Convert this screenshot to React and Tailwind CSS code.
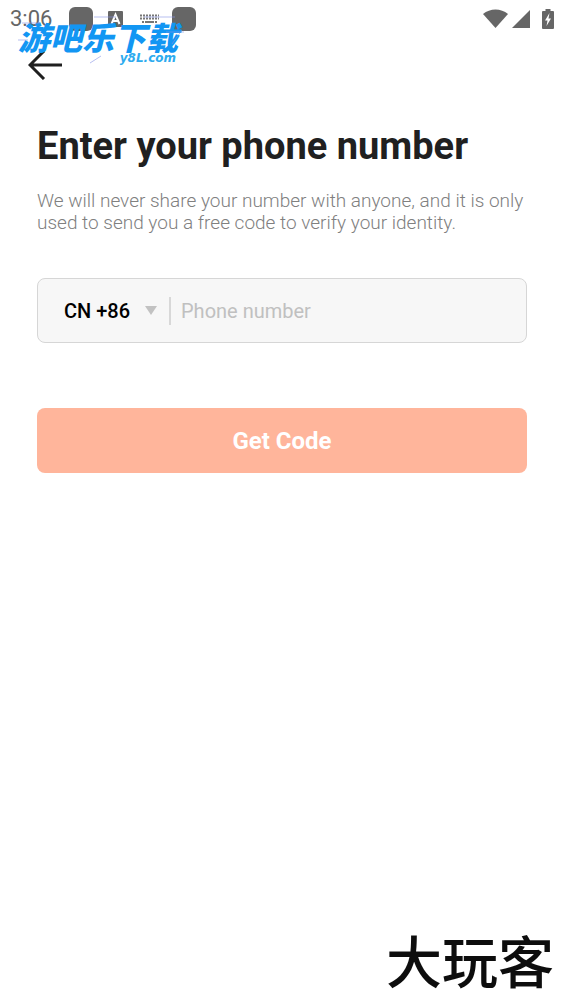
import { useState } from 'react';

const countries = [
  { code: 'CN', dial: '+86' },
  { code: 'US', dial: '+1' },
  { code: 'JP', dial: '+81' },
];

function StatusBar() {
  return (
    <div className="flex h-9 items-center justify-between px-[10px] text-[#666666]">
      <div className="flex items-center">
        <span className="w-[59px] text-[22px] leading-9">3:06</span>
        <span className="h-6 w-6 rounded-md bg-[#666666]" />
        <svg className="ml-[15px]" width="15" height="16" viewBox="0 0 15 16" aria-hidden="true">
          <rect width="15" height="16" rx="1" fill="#666666" />
          <path d="M3.5 13L7.5 3.5L11.5 13M5 10H10" fill="none" stroke="#ffffff" strokeWidth="2" />
        </svg>
        <svg className="ml-[17px]" width="19" height="10" viewBox="0 0 19 10" aria-hidden="true">
          <path d="M0 1.5H19M0 4.5H19" stroke="#777777" strokeWidth="2" strokeDasharray="2 1" />
          <path d="M2 8H17" stroke="#777777" strokeWidth="2" strokeDasharray="2 1 9 1" />
        </svg>
        <span className="ml-[13px] h-6 w-6 rounded-md bg-[#666666]" />
      </div>
      <div className="flex items-center">
        <svg width="25" height="20" viewBox="0 0 25 20" fill="#666666" aria-hidden="true">
          <path d="M0 5C7-1 18-1 25 5L12.5 19Z" />
        </svg>
        <svg className="ml-1" width="18" height="18" viewBox="0 0 18 18" fill="#666666" aria-hidden="true">
          <path d="M18 0V18H0Z" />
        </svg>
        <svg className="ml-3" width="12" height="20" viewBox="0 0 12 20" aria-hidden="true">
          <path d="M3.5 0H8.5V2H11Q12 2 12 3V19Q12 20 11 20H1Q0 20 0 19V3Q0 2 1 2H3.5Z" fill="#666666" />
          <path d="M7.5 4L3 11.5H5.5L4.5 17L9 9.5H6.5Z" fill="#ffffff" />
        </svg>
      </div>
    </div>
  );
}

function SiteMark() {
  return (
    <div className="pointer-events-none absolute left-[18px] top-[20px] w-[166px] text-[#1296f3]">
      <svg className="absolute inset-x-0 -top-1" width="166" height="48" viewBox="0 0 166 48" fill="none" stroke="#8995e8" strokeWidth="1" opacity="0.6" aria-hidden="true">
        <path d="M4 7H22M76 1H98M126 1H157M0 24H10M148 16H166M72 47L83 40M154 28L164 14" />
      </svg>
      <div className="whitespace-nowrap text-[32px] font-black italic leading-[32px] font-['Noto_Sans_CJK_SC',sans-serif]">
        游吧乐下载
      </div>
      <div className="pr-2 text-right text-[12px] font-bold italic leading-[12px] text-[#2dabef] font-['DejaVu_Sans',sans-serif]">
        y8L.com
      </div>
    </div>
  );
}

function App() {
  const [country, setCountry] = useState('CN');
  const [phone, setPhone] = useState('');

  return (
    <div className="relative flex min-h-screen flex-col bg-white pt-px font-[Roboto,sans-serif]">
      <StatusBar />

      <header className="flex h-14 items-center pl-7">
        <button type="button" aria-label="Back">
          <svg width="34" height="30" viewBox="0 0 34 30" fill="none" stroke="#1f1f1f" strokeWidth="3" aria-hidden="true">
            <path d="M16 1L2 15L16 29M2 15H34" />
          </svg>
        </button>
      </header>

      <main className="px-[37px] pt-[31px]">
        <h1 className="text-[38px] font-bold leading-[44px] text-[#202020]">Enter your phone number</h1>
        <p className="mt-[22px] text-[19px] font-light leading-[22px] text-[#808080]">
          We will never share your number with anyone, and it is only used to send you a free code to verify your identity.
        </p>

        <form onSubmit={(e) => e.preventDefault()}>
          <div className="mt-11 flex h-[65px] items-center rounded-lg border border-[#d6d6d6] bg-[#f7f7f7] pl-[26px] pr-4 text-[20px]">
            <div className="relative flex items-center">
              <select
                aria-label="Country code"
                value={country}
                onChange={(e) => setCountry(e.target.value)}
                className="w-[93px] appearance-none bg-transparent font-medium text-black outline-none"
              >
                {countries.map((c) => (
                  <option key={c.code} value={c.code}>{c.code} {c.dial}</option>
                ))}
              </select>
              <svg className="pointer-events-none absolute right-0" width="12" height="9" viewBox="0 0 12 9" fill="#c2c2c2" aria-hidden="true">
                <path d="M0 0H12L6 9Z" />
              </svg>
            </div>
            <span className="ml-3 h-7 w-0.5 bg-[#d8d8d8]" />
            <input
              type="tel"
              aria-label="Phone number"
              placeholder="Phone number"
              value={phone}
              onChange={(e) => setPhone(e.target.value)}
              className="ml-[10px] min-w-0 flex-1 bg-transparent text-black outline-none placeholder:text-[#c0c0c0]"
            />
          </div>

          <button type="submit" className="mt-[65px] h-[65px] w-full rounded-lg bg-[#ffb59b] text-[24px] font-bold text-white">
            Get Code
          </button>
        </form>
      </main>

      <footer className="mt-auto flex justify-end pb-[14px] pr-[10px]">
        <span className="text-[56px] font-medium leading-[60px] text-[#0d0d0d] font-['Noto_Sans_CJK_SC',sans-serif]">大玩客</span>
      </footer>

      <SiteMark />
    </div>
  );
}

export default App;
